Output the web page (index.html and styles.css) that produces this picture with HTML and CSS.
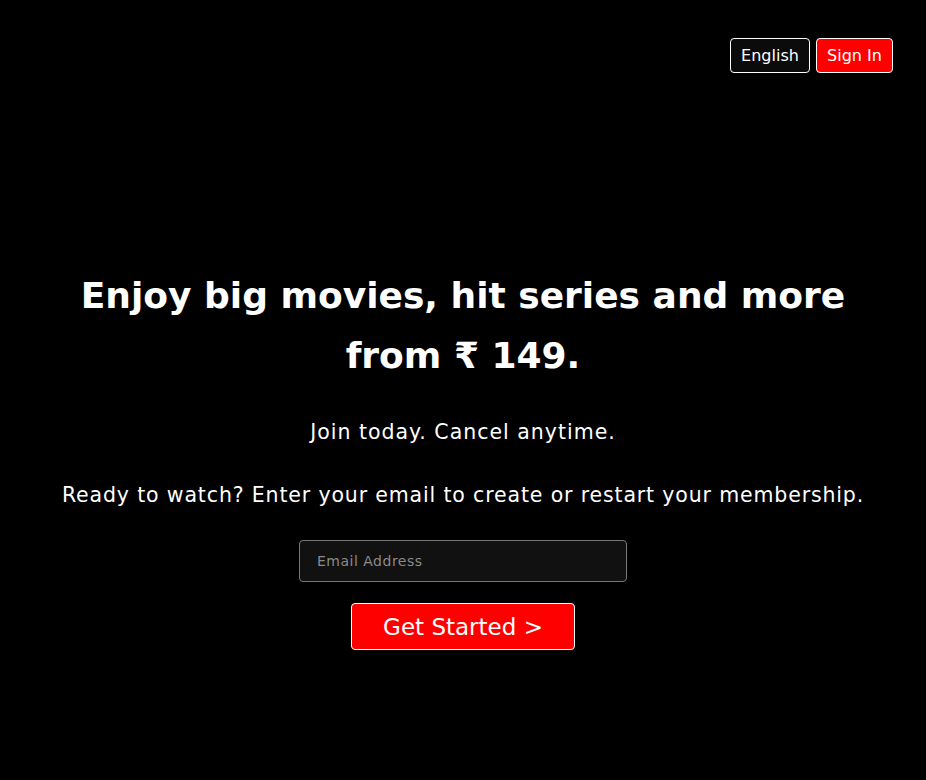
FILE: index.html
```html
<!DOCTYPE html>
<html lang="en">
<head>
<meta charset="utf-8">
<title>Netflix</title>
<link rel="stylesheet" href="styles.css">
</head>
<body>
<header class="nav">
  <button class="btn btn-lang">English</button>
  <button class="btn btn-sign">Sign In</button>
</header>
<main class="hero">
  <h1 class="title">Enjoy big movies, hit series and more<br>from ₹ 149.</h1>
  <p class="sub">Join today. Cancel anytime.</p>
  <p class="ready">Ready to watch? Enter your email to create or restart your membership.</p>
  <input class="email" type="email" placeholder="Email Address">
  <button class="cta">Get Started &gt;</button>
</main>
</body>
</html>
```
FILE: styles.css
```css
* { box-sizing: border-box; }
html, body { margin: 0; padding: 0; background: #000; color: #fff; }
body { font-family: "DejaVu Sans", "Noto Sans", sans-serif; height: 780px; }
.nav {
  display: flex;
  justify-content: flex-end;
  gap: 6px;
  padding: 38px 33px 0 0;
}
.btn {
  font-family: inherit;
  font-size: 16px;
  height: 35px;
  border: 1px solid #fff;
  border-radius: 4px;
  color: #fff;
  padding: 0;
  cursor: pointer;
}
.btn-lang { background: #0b0b0b; width: 80px; }
.btn-sign { background: #ff0000; width: 77px; }
.hero {
  display: flex;
  flex-direction: column;
  align-items: center;
  text-align: center;
  padding-top: 193px;
}
.title {
  margin: 0;
  font-size: 36px;
  font-weight: 700;
  line-height: 60px;
}
.sub {
  margin: 31px 0 0;
  font-size: 20.5px;
  line-height: 30px;
  letter-spacing: 1px;
}
.ready {
  margin: 33px 0 0;
  font-size: 20.5px;
  line-height: 30px;
  letter-spacing: 0.85px;
}
.email {
  margin-top: 30px;
  width: 328px;
  height: 42px;
  background: #111;
  border: 1px solid #777;
  border-radius: 4px;
  color: #fff;
  padding: 0 17px;
  font-family: inherit;
  font-size: 14px;
  letter-spacing: 0.5px;
}
.email::placeholder { color: #8a8a8a; }
.cta {
  margin-top: 21px;
  width: 224px;
  height: 47px;
  background: #ff0000;
  border: 1px solid #fff;
  border-radius: 4px;
  color: #fff;
  font-family: inherit;
  font-size: 23px;
  cursor: pointer;
}
```
